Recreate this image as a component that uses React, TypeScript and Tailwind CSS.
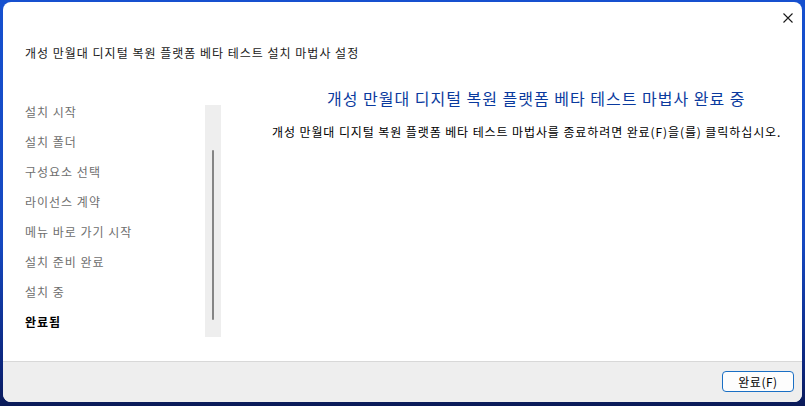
import React from "react";

const font = { fontFamily: '"Noto Sans CJK KR", "Noto Sans", sans-serif' };

const steps = [
  "설치 시작",
  "설치 폴더",
  "구성요소 선택",
  "라이선스 계약",
  "메뉴 바로 가기 시작",
  "설치 준비 완료",
  "설치 중",
];

export default function App() {
  return (
    <div
      className="w-[805px] h-[406px] overflow-hidden bg-[linear-gradient(180deg,#1650cf_0%,#1548c0_60%,#0c2478_92%,#0a1a58_100%)] pl-[3px] pt-[2px]"
      style={font}
    >
      <div className="w-[799px] h-[400px] bg-white rounded-[8px] flex flex-col overflow-hidden">
        {/* title bar */}
        <div className="h-[30px] flex justify-end items-center pr-[9px] shrink-0">
          <svg width="10" height="10" viewBox="0 0 10 10" className="mt-[1px]">
            <path d="M0.5 0.5 L9.5 9.5 M9.5 0.5 L0.5 9.5" stroke="#1a1a1a" strokeWidth="1.1" fill="none" />
          </svg>
        </div>
        {/* title */}
        <div className="h-[43px] shrink-0 pl-[22px] pt-[13px]">
          <div className="text-[12px] leading-[16px] tracking-[1px] text-[#1a1a1a]">
            개성 만월대 디지털 복원 플랫폼 베타 테스트 설치 마법사 설정
          </div>
        </div>
        {/* body */}
        <div className="flex-1 flex min-h-0">
          <div className="w-[237px] shrink-0 flex pt-[22px]">
            <div className="w-[202px] pl-[22px] flex flex-col">
              {steps.map((s) => (
                <div key={s} className="h-[30px] flex items-center text-[12px] tracking-[1px] text-[#6e6e6e]">
                  {s}
                </div>
              ))}
              <div className="h-[30px] flex items-center text-[12px] tracking-[1px] font-bold text-black">완료됨</div>
            </div>
            <div className="w-[16px] h-[232px] mt-[8px] bg-[#eeeeee] flex flex-col items-center pt-[45px]">
              <div className="w-[2px] h-[170px] bg-[#858585] rounded-full" />
            </div>
          </div>
          <div className="flex-1 flex flex-col">
            <div className="pl-[87px] pt-[12px] text-[16px] leading-[22px] tracking-[1px] text-[#0a3a9e] whitespace-nowrap">
              개성 만월대 디지털 복원 플랫폼 베타 테스트 마법사 완료 중
            </div>
            <div className="pl-[32px] pt-[15px] text-[12px] leading-[16px] tracking-[0.9px] text-black whitespace-nowrap">
              개성 만월대 디지털 복원 플랫폼 베타 테스트 마법사를 종료하려면 완료(F)을(를) 클릭하십시오.
            </div>
          </div>
        </div>
        {/* footer */}
        <div className="h-[41px] shrink-0 border-t border-[#d8d8d8] bg-[#eeeeee] flex items-start justify-end pr-[8px] pt-[9px]">
          <button className="w-[72px] h-[21px] rounded-[4px] border border-[#1a6fc4] bg-[#fdfdfd] text-[12px] leading-[16px] tracking-[0.5px] text-black flex items-center justify-center">
            완료(F)
          </button>
        </div>
      </div>
    </div>
  );
}
